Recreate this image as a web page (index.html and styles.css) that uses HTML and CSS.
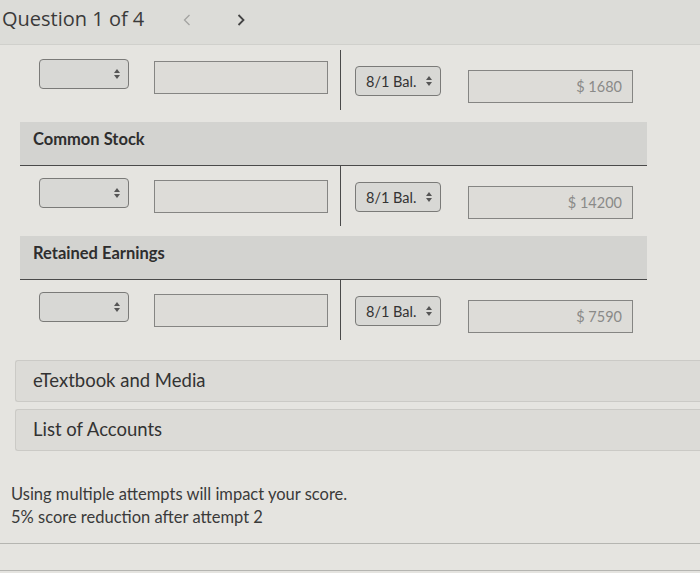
FILE: index.html
```html
<!DOCTYPE html>
<html lang="en">
<head>
    <meta charset="UTF-8">
    <meta name="viewport" content="width=device-width, initial-scale=1.0">
    <title>Question 1 of 4</title>
    <link rel="stylesheet" href="styles.css">
</head>
<body>
    <header class="topbar">
        <h1>Question 1 of 4</h1>
        <svg class="nav-arrow prev" width="8" height="12" viewBox="0 0 8 12"><path d="M6.5 1 L1.5 6 L6.5 11" fill="none" stroke="currentColor" stroke-width="1.3"/></svg>
        <svg class="nav-arrow next" width="8" height="12" viewBox="0 0 8 12"><path d="M1.5 1 L6.5 6 L1.5 11" fill="none" stroke="currentColor" stroke-width="1.8"/></svg>
    </header>

    <div class="ledger">
        <div class="t-row">
            <div class="side left">
                <div class="select"><span></span><i class="updown"></i></div>
                <div class="amount"></div>
            </div>
            <div class="side right">
                <div class="select small"><span>8/1 Bal.</span><i class="updown"></i></div>
                <div class="amount wide">$ 1680</div>
            </div>
        </div>

        <div class="acct-head">Common Stock</div>
        <div class="t-row">
            <div class="side left">
                <div class="select"><span></span><i class="updown"></i></div>
                <div class="amount"></div>
            </div>
            <div class="side right">
                <div class="select small"><span>8/1 Bal.</span><i class="updown"></i></div>
                <div class="amount wide">$ 14200</div>
            </div>
        </div>

        <div class="acct-head">Retained Earnings</div>
        <div class="t-row">
            <div class="side left">
                <div class="select"><span></span><i class="updown"></i></div>
                <div class="amount"></div>
            </div>
            <div class="side right">
                <div class="select small"><span>8/1 Bal.</span><i class="updown"></i></div>
                <div class="amount wide">$ 7590</div>
            </div>
        </div>
    </div>

    <div class="panels">
        <div class="panel">eTextbook and Media</div>
        <div class="panel">List of Accounts</div>
    </div>

    <p class="notice">Using multiple attempts will impact your score.<br>5% score reduction after attempt 2</p>

    <div class="footer-lines">
        <div class="line"></div>
        <div class="line"></div>
    </div>
</body>
</html>
```

FILE: styles.css
```css
body {
    margin: 0;
    padding: 0;
    width: 700px;
    height: 573px;
    overflow: hidden;
    background-color: #e5e4e0;
    color: #333;
    font-family: Lato, "Open Sans", sans-serif;
}

.topbar {
    height: 44px;
    display: flex;
    align-items: center;
    background-color: #dcdcd8;
    border-bottom: 1px solid #d0d0cc;
}

.topbar h1 {
    margin: 0 0 8px 2px;
    font-family: "Open Sans", sans-serif;
    font-weight: 400;
    font-size: 20px;
    color: #3a3a3a;
}

.nav-arrow {
    margin-bottom: 4px;
}

.nav-arrow.prev {
    margin-left: 39px;
    color: #a3a3a1;
}

.nav-arrow.next {
    margin-left: 46px;
    color: #444;
}

.ledger {
    margin-left: 20px;
    width: 627px;
}

.t-row {
    display: flex;
    height: 60px;
}

.t-row:first-child {
    margin-top: 5px;
    margin-bottom: 12px;
}

.side {
    display: flex;
    align-items: flex-start;
    padding-top: 12px;
}

.t-row:first-child .side.left {
    padding-top: 9px;
}

.side.left {
    width: 321px;
    padding-left: 19px;
    gap: 25px;
    border-right: 1px solid #4a4a4a;
    box-sizing: border-box;
}

.side.right {
    padding-left: 14px;
    gap: 27px;
    padding-top: 16px;
}

.select {
    width: 90px;
    height: 30px;
    box-sizing: border-box;
    border: 1px solid #7a7a78;
    border-radius: 4px;
    background-color: #d8d8d5;
    display: flex;
    align-items: center;
    justify-content: space-between;
    padding: 0 8px 0 10px;
    font-size: 14.5px;
    color: #333;
}

.select.small {
    width: 86px;
}

.updown {
    display: flex;
    flex-direction: column;
    gap: 2px;
}

.updown::before,
.updown::after {
    content: "";
    width: 0;
    height: 0;
    border-left: 3px solid transparent;
    border-right: 3px solid transparent;
}

.updown::before {
    border-bottom: 4px solid #555;
}

.updown::after {
    border-top: 4px solid #555;
}

.amount {
    width: 174px;
    height: 33px;
    box-sizing: border-box;
    border: 1px solid #858583;
    background-color: #dddcd8;
    margin-top: 2px;
    display: flex;
    align-items: center;
    justify-content: flex-end;
    padding-right: 10px;
    font-size: 14.5px;
    color: #8a8a88;
}

.amount.wide {
    width: 165px;
    margin-top: 4px;
}

.acct-head {
    height: 44px;
    box-sizing: border-box;
    background-color: #d3d3d0;
    border-bottom: 1px solid #4a4a4a;
    padding: 7px 0 0 13px;
    font-weight: 700;
    font-size: 16.5px;
    color: #2e2e2e;
}

.t-row + .acct-head {
    margin-top: 10px;
}

.t-row:first-child + .acct-head {
    margin-top: 0;
}

.panels {
    margin-top: 20px;
    padding-left: 15px;
    display: flex;
    flex-direction: column;
    gap: 7px;
}

.panel {
    height: 42px;
    box-sizing: border-box;
    background-color: #dcdbd7;
    border: 1px solid #cbcac6;
    border-right: none;
    border-radius: 3px 0 0 3px;
    padding: 8px 0 0 17px;
    font-size: 18.5px;
    color: #333;
}

.notice {
    margin: 32px 0 0 11px;
    font-size: 16.5px;
    line-height: 23px;
    color: #3a3a3a;
}

.footer-lines {
    margin-top: 14px;
}

.line {
    height: 1px;
    background-color: #b5b5b1;
    margin-bottom: 26px;
}
```
